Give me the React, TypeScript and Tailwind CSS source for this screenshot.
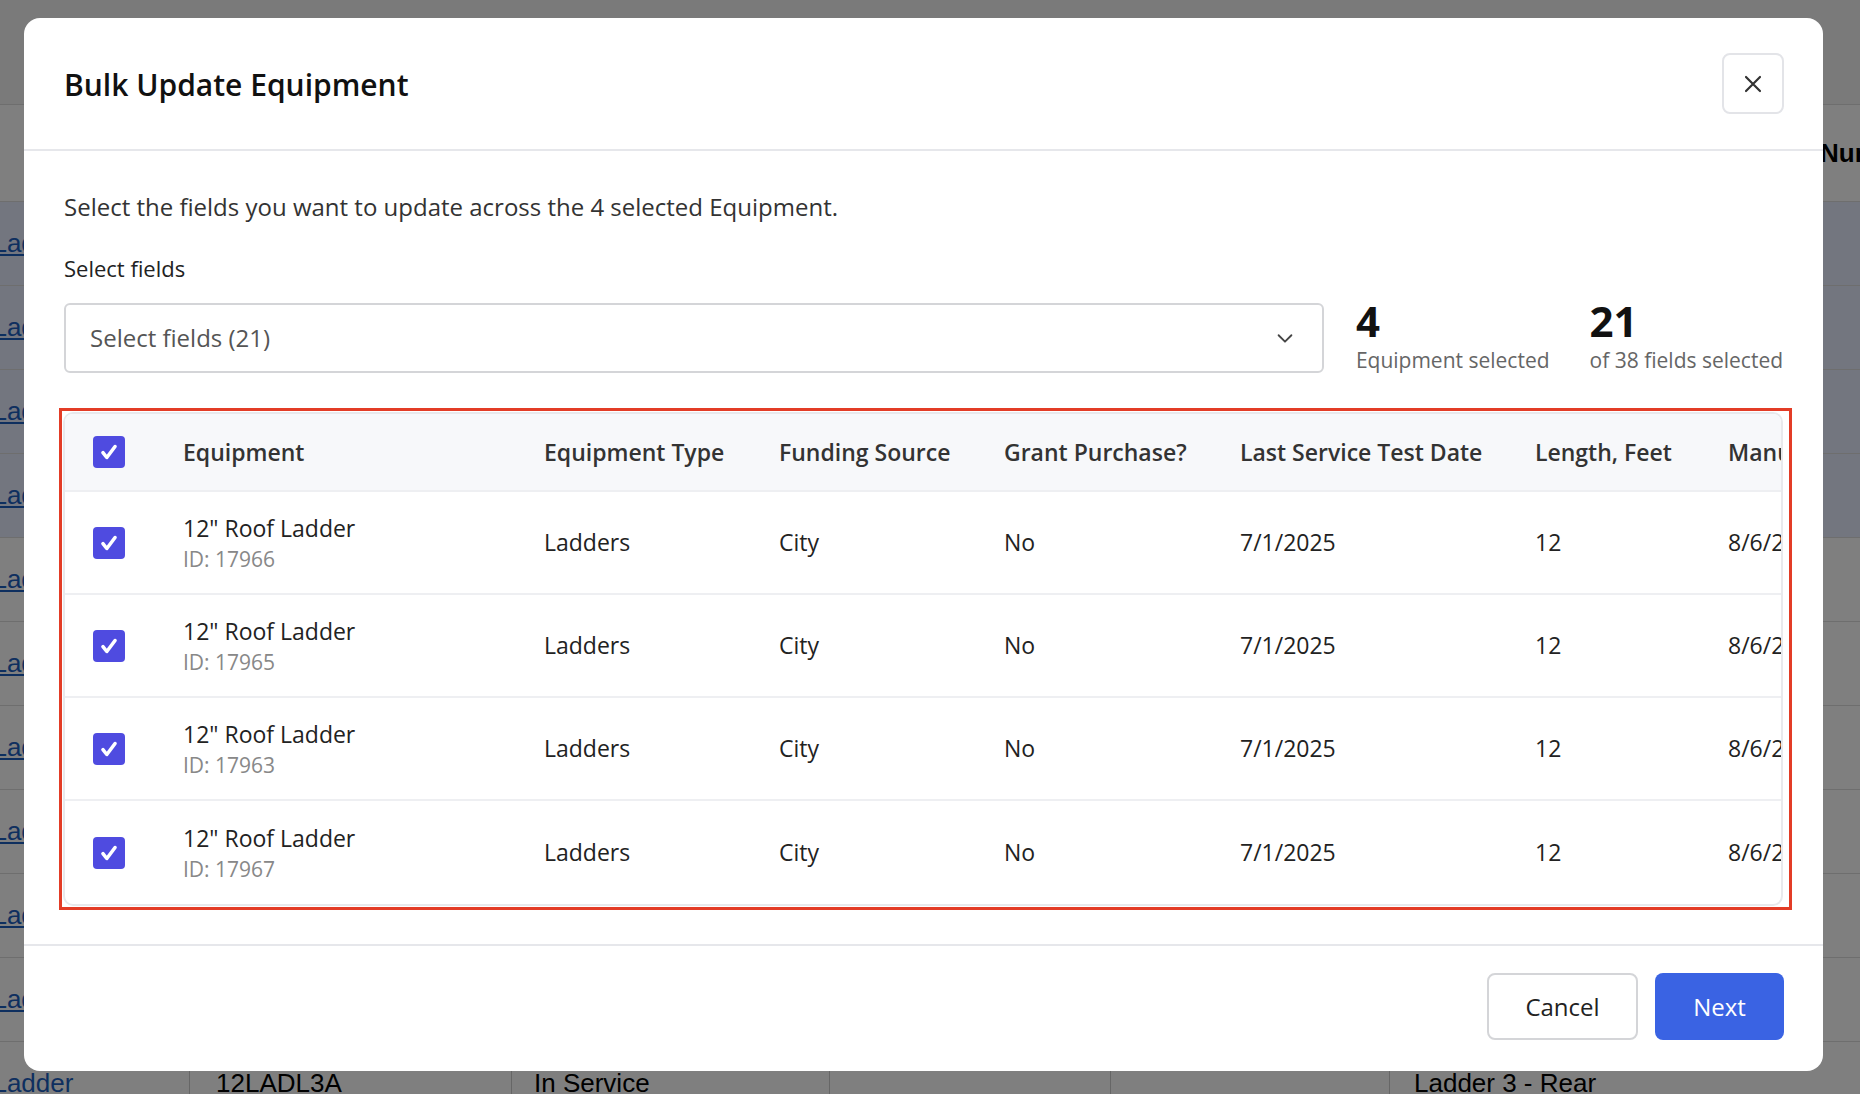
import React from "react";

const rows = ["17966", "17965", "17963", "17967"];

function Check() {
  return (
    <div className="w-[32px] h-[32px] rounded-[4px] bg-[#4f4be0] flex items-center justify-center">
      <svg width="22" height="22" viewBox="0 0 20 20" fill="none">
        <path d="M4.5 10.5l3.5 4.5 7.5-10" stroke="white" strokeWidth="3.2" strokeLinecap="round" strokeLinejoin="round" />
      </svg>
    </div>
  );
}

const cols = "grid grid-cols-[118px_361px_235px_225px_236px_295px_193px_200px] items-center";

export default function App() {
  const bgRows = Array.from({ length: 11 });
  return (
    <div className="relative w-[1860px] h-[1094px] overflow-hidden bg-white" style={{ fontFamily: '"Liberation Sans", Arial, sans-serif' }}>
      {/* background page */}
      <div className="flex flex-col">
        <div className="h-[105px] bg-[#f4f4f4] border-b border-[#ddd]" />
        <div className="h-[97px] flex items-center border-b border-[#ddd] text-[26px] font-bold text-black pl-[1820px] whitespace-nowrap">
          <span>Number</span>
        </div>
        {bgRows.map((_, i) => (
          <div key={i} className={`h-[84px] flex items-end border-b border-[#ddd] text-[26px] ${i < 4 ? "bg-[#e6ecff]" : "bg-white"}`}>
            <div className="w-[190px] border-r border-[#ccc] h-full flex items-center text-[#1d5fbf] underline whitespace-nowrap">
              <span className="ml-[-22px]">f Ladder</span>
            </div>
            <div className="w-[322px] border-r border-[#ccc] h-full flex items-center pl-[26px]">12LADL3A</div>
            <div className="w-[318px] border-r border-[#ccc] h-full flex items-center pl-[22px]">In Service</div>
            <div className="w-[281px] border-r border-[#ccc] h-full" />
            <div className="w-[279px] border-r border-[#ccc] h-full" />
            <div className="flex-1 h-full flex items-center pl-[24px]">Ladder 3 - Rear</div>
          </div>
        ))}
      </div>

      {/* overlay */}
      <div className="absolute inset-0 bg-black/50 pl-[24px] pt-[18px]" style={{ fontFamily: '"Open Sans", "Noto Sans", sans-serif' }}>
        <div className="w-[1799px] h-[1053px] bg-white rounded-[16px] flex flex-col overflow-hidden">
          {/* header */}
          <div className="h-[133px] shrink-0 border-b-2 border-[#e6e7eb] flex items-center justify-between pl-[40px] pr-[39px]">
            <h1 className="text-[30px] font-semibold text-[#111] mt-[2px]">Bulk Update Equipment</h1>
            <button className="w-[62px] h-[61px] rounded-[8px] border-2 border-[#e3e4e8] flex items-center justify-center text-[#333]">
              <svg width="24" height="24" viewBox="0 0 24 24" fill="none">
                <path d="M5 5l14 14M19 5L5 19" stroke="#333" strokeWidth="2.2" strokeLinecap="round" />
              </svg>
            </button>
          </div>

          {/* body */}
          <div className="flex-1 pl-[40px] pr-[40px] pt-[40px] flex flex-col">
            <p className="text-[24px] text-[#333] leading-[32px]">Select the fields you want to update across the 4 selected Equipment.</p>
            <div className="mt-[30px] text-[22px] text-[#222] leading-[30px]">Select fields</div>
            <div className="mt-[16px] flex items-end">
              <div className="w-[1260px] h-[70px] rounded-[6px] border-2 border-[#d4d5d8] flex items-center justify-between pl-[24px] pr-[26px]">
                <span className="text-[24px] text-[#555]">Select fields (21)</span>
                <svg width="22" height="22" viewBox="0 0 24 24" fill="none">
                  <path d="M5 9l7 7 7-7" stroke="#444" strokeWidth="2" strokeLinecap="round" strokeLinejoin="round" />
                </svg>
              </div>
              <div className="ml-[32px] flex flex-col">
                <span className="text-[42px] font-bold leading-[44px] text-[#111]">4</span>
                <span className="text-[21px] text-[#666] leading-[26px] mt-[4px]">Equipment selected</span>
              </div>
              <div className="ml-[40px] flex flex-col">
                <span className="text-[42px] font-bold leading-[44px] text-[#111]">21</span>
                <span className="text-[21px] text-[#666] leading-[26px] mt-[4px]">of 38 fields selected</span>
              </div>
            </div>

            {/* table */}
            <div className="mt-[35px] ml-[-5px] w-[1733px] border-[3px] border-[#e33c26] p-[1px]">
              <div className="w-[1720px] rounded-[10px] border-2 border-[#e8e9ec] overflow-hidden text-[23px]">
                <div className={`${cols} h-[78px] bg-[#f7f8fa] border-b-2 border-[#eeeff2] font-semibold text-[#333] whitespace-nowrap`}>
                  <div className="pl-[28px]"><Check /></div>
                  <div>Equipment</div>
                  <div>Equipment Type</div>
                  <div>Funding Source</div>
                  <div>Grant Purchase?</div>
                  <div>Last Service Test Date</div>
                  <div>Length, Feet</div>
                  <div className="overflow-hidden w-[55px]">Manufacture Date</div>
                </div>
                {rows.map((id, i) => (
                  <div key={id} className={`${cols} h-[103px] text-[#222] whitespace-nowrap ${i < 3 ? "border-b-2 border-[#eeeff2]" : ""}`}>
                    <div className="pl-[28px]"><Check /></div>
                    <div className="flex flex-col">
                      <span className="leading-[30px]">12" Roof Ladder</span>
                      <span className="text-[21px] text-[#888] leading-[28px] mt-[2px]">ID: {id}</span>
                    </div>
                    <div>Ladders</div>
                    <div>City</div>
                    <div>No</div>
                    <div>7/1/2025</div>
                    <div>12</div>
                    <div className="overflow-hidden w-[55px]">8/6/2025</div>
                  </div>
                ))}
              </div>
            </div>
          </div>

          {/* footer */}
          <div className="h-[127px] shrink-0 border-t-2 border-[#e6e7eb] flex items-center justify-end gap-[17px] pr-[39px] pb-[4px]">
            <button className="w-[151px] h-[67px] rounded-[8px] border-2 border-[#d4d5d8] text-[24px] text-[#222] bg-white">Cancel</button>
            <button className="w-[129px] h-[67px] rounded-[8px] bg-[#3a63e3] text-[24px] text-white">Next</button>
          </div>
        </div>
      </div>
    </div>
  );
}
